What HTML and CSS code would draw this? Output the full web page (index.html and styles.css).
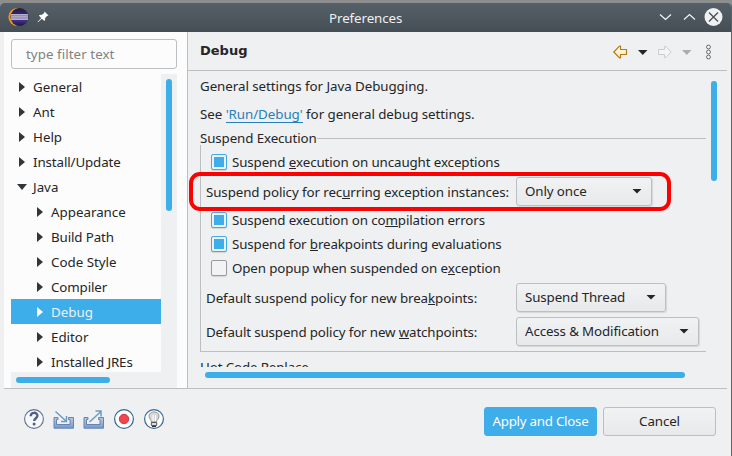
FILE: index.html
```html
<!DOCTYPE html>
<html lang="en">
<head>
<meta charset="utf-8">
<title>Preferences</title>
<link rel="stylesheet" href="styles.css">
</head>
<body>
<div class="window">
  <header class="titlebar">
    <svg class="logo" width="22" height="20" viewBox="0 0 22 20"><defs><linearGradient id="ec" x2="0" y2="1"><stop offset="0" stop-color="#241a4b"/><stop offset=".7" stop-color="#40318d"/><stop offset="1" stop-color="#211741"/></linearGradient></defs><circle cx="9.5" cy="10" r="9.1" fill="#f7941e"/><circle cx="11.5" cy="10" r="9" fill="#263038"/><circle cx="11.5" cy="10" r="8.7" fill="url(#ec)"/><path d="M3 7h17v6H3z" fill="#b3accb"/><path d="M3 8.7h17M3 11h17" stroke="#7d719e" stroke-width=".7"/></svg>
    <svg class="pin" width="12" height="12" viewBox="0 0 12 12"><path d="M7.5.5 11.5 4.5 10 5 8.2 7 8 9.8 6.8 9.5 4.8 7.7 1 11.3.5 11 4.2 7 2 4.8 2.3 4 5 3.8 7.1 2z" fill="#fcfcfc"/></svg>
    <h1 class="caption">Preferences</h1>
    <svg class="winbtns" width="66" height="20" viewBox="0 0 66 20" fill="none" stroke="#f4f5f6" stroke-width="1.2"><path d="m2 7.5 5.5 5 5.5-5M26 12.5l5.5-5 5.5 5"/><circle cx="55.5" cy="10" r="9" fill="#eff0f1" stroke="none"/><path d="m51 5.5 9 9m0-9-9 9" stroke="#475057" stroke-width="1.3"/></svg>
  </header>
  <main class="main">
    <aside class="side">
      <div class="filter"><span>type filter text</span></div>
      <div class="treebox">
        <ul class="tree">
          <li><i class="tri"></i><span>General</span></li>
          <li><i class="tri"></i><span>Ant</span></li>
          <li><i class="tri"></i><span>Help</span></li>
          <li><i class="tri"></i><span class="snug">Install/Update</span></li>
          <li><i class="tri open"></i><span>Java</span></li>
          <li class="sub"><i class="tri"></i><span>Appearance</span></li>
          <li class="sub"><i class="tri"></i><span class="snug">Build Path</span></li>
          <li class="sub"><i class="tri"></i><span>Code Style</span></li>
          <li class="sub"><i class="tri"></i><span class="snug">Compiler</span></li>
          <li class="sub sel"><i class="tri"></i><span>Debug</span></li>
          <li class="sub"><i class="tri"></i><span>Editor</span></li>
          <li class="sub"><i class="tri"></i><span class="snug">Installed JREs</span></li>
        </ul>
        <div class="gutter"><div class="thumb-v"></div></div>
        <div class="gutter-h"><div class="thumb-h"></div></div>
      </div>
    </aside>
    <section class="page">
      <div class="pagehead">
        <h2>Debug</h2>
        <svg class="nav" width="102" height="16" viewBox="0 0 102 16"><defs><linearGradient id="ar" x2="0" y2="1"><stop offset="0" stop-color="#fff"/><stop offset="1" stop-color="#ffe79a"/></linearGradient></defs><path d="M.8 8 6.5 2.2h1v3.3h6v5h-6v3.3h-1z" fill="url(#ar)" stroke="#b5781a" stroke-linejoin="round" stroke-width="1.2"/><path d="M25 6h9.500l-4.750 5z" fill="#232629"/><path d="M58.200 8 52.500 2.200h-1v3.300h-6v5h6v3.300h1z" fill="#f5f5f5" stroke="#cbcbcb" stroke-linejoin="round"/><path d="M69 6h9.500l-4.750 5z" fill="#acadae"/><g fill="#fff" stroke="#555" stroke-width=".9"><circle cx="95.500" cy="3" r="1.900"/><circle cx="95.500" cy="8" r="1.900"/><circle cx="95.500" cy="13" r="1.900"/></g></svg>
      </div>
      <div class="viewport">
        <div class="content">
          <p class="line1"><span class="s5">General settings for Java Debugging.</span></p>
          <p class="line2"><span class="s5">See <a>'Run/Debug'</a> for general debug settings.</span></p>
          <div class="legend"><span class="snug">Suspend Execution</span><i></i></div>
          <div class="group">
            <div class="check"><i class="box on"></i><span class="snug">Suspend <u>e</u>xecution on uncaught exceptions</span></div>
            <div class="row first"><span class="lab l1">Suspend policy for rec<u>u</u>rring exception instances:</span><div class="combo c1"><span class="snug">Only once</span><i></i></div><div class="mark"></div></div>
            <div class="check"><i class="box on"></i><span class="snug">Suspend execution on co<u>m</u>pilation errors</span></div>
            <div class="check"><i class="box on"></i><span class="snug">Suspend for <u>b</u>reakpoints during evaluations</span></div>
            <div class="check"><i class="box"></i><span class="s13">Open popup when suspended on e<u>x</u>ception</span></div>
            <div class="row"><span class="lab">Default suspend policy for new brea<u>k</u>points:</span><div class="combo c2"><span class="snug">Suspend Thread</span><i></i></div></div>
            <div class="row"><span class="lab s13">Default suspend policy for new <u>w</u>atchpoints:</span><div class="combo c3"><span class="s13">Access &amp; Modification</span><i></i></div></div>
          </div>
          <div class="hot"><span class="s13">Hot Code Replace</span></div>
        </div>
        <div class="vbar"></div>
        <div class="hbar"></div>
      </div>
    </section>
  </main>
  <footer class="footer">
    <svg class="tools" width="142" height="24" viewBox="0 0 142 24" fill="none">
      <defs><linearGradient id="tr" x2="0" y2="1"><stop offset="0" stop-color="#b9cde3"/><stop offset="1" stop-color="#7697c5"/></linearGradient></defs>
      <circle cx="11" cy="12" r="9.400" fill="#f6f8fb" stroke="#626f90" stroke-width="1.100"/>
      <path d="M7.700 9.300c0-4.700 6.900-4.400 6.700-.5-.1 2.400-3.200 2.600-3.200 5.300" stroke="#526087" stroke-width="2.400"/><circle cx="11.100" cy="17" r="1.500" fill="#526087"/>
      <path d="M31 10.500h4v2h-1.500v5H47v-5h-1.500v-2h5v10.700H31z" fill="url(#tr)" stroke="#6584b5"/>
      <path d="M32.500 4.500 43 14m.5-5v5.500H38" stroke="#6b9cc4" stroke-width="1.500"/>
      <path d="M61 10.500h4v2h-1.500v5H77v-5h-1.500v-2h5v10.700H61z" fill="url(#tr)" stroke="#6584b5"/>
      <path d="M66.500 15 78 4.500M72.500 4H78v5.500" stroke="#6b9cc4" stroke-width="1.500"/>
      <circle cx="101" cy="12" r="9.400" fill="#fff" stroke="#336897" stroke-width="1.200"/><circle cx="101" cy="12" r="4.700" fill="#ef4650" stroke="#d9303d"/>
      <circle cx="131" cy="12" r="9.400" fill="#fff" stroke="#336897" stroke-width="1.200"/>
      <path d="M128.500 15c0-2-2.500-3-2.500-6 0-5.500 10-5.500 10 0 0 3-2.500 4-2.500 6z" fill="#d8d8d8" stroke="#969696"/><path d="M130 8v6m2.500-6v6" stroke="#fff"/><path d="M128.300 15.500h5.400v3h-5.400z" fill="#ddd" stroke="#555"/><path d="M129 19.500h4" stroke="#333"/>
    </svg>
    <button class="btn primary"><span>Apply and Close</span></button>
    <button class="btn"><span class="snug">Cancel</span></button>
  </footer>
</div>
</body>
</html>
```
FILE: styles.css
```css
* { box-sizing: border-box; }
body { display: flow-root; height: 456px; margin: 0; overflow: hidden; background: #8e8e8e; font: 13.333px/20px "Noto Sans", sans-serif; color: #232629; }
h1, h2, p, ul { margin: 0; padding: 0; }
span { white-space: nowrap; }
u { display: inline-block; line-height: 14px; text-decoration: none; box-shadow: inset 0 -1px #232629; }
.snug { letter-spacing: -.11px; }
.s5 { letter-spacing: -.05px; }
.window { display: flex; flex-direction: column; width: 732px; height: 453px; margin-top: 3px; background: #eff0f1; border-right: 1px solid #5c6368; border-radius: 4px 4px 0 0; overflow: hidden; }
.titlebar { display: flex; align-items: center; flex: none; height: 29px; padding: 0 7px 0 8px; background: linear-gradient(#566068, #454e55); color: #eff0f1; }
.logo { margin-right: 7px; margin-bottom: 1px; }
.pin { margin-bottom: 1px; }
.caption { flex: 1; font-size: 13.333px; font-weight: 400; padding-left: 280px; letter-spacing: -.08px; }
.winbtns { margin-bottom: 1px; }
.main { display: flex; flex: none; height: 357px; margin: 0 4px; border-bottom: 1px solid #bcbec0; }
.side { width: 184px; padding: 7px 10px 0 7px; background: #fcfcfc; border-right: 1px solid #bcbec0; }
.filter { width: 166px; height: 30px; padding: 4px 14px; border: 1px solid #bcbec0; border-radius: 3px; color: #7f8385; letter-spacing: .06px; }
.treebox { display: grid; grid-template: 298px 16px / 150px 16px; margin-top: 5px; }
.tree { list-style: none; overflow: hidden; }
.tree li { display: flex; align-items: center; height: 25px; padding-left: 8px; padding-top: 1px; }
.tree .sub { padding-left: 26px; }
.tri { width: 6px; height: 10px; margin-right: 8px; background: #31363b; clip-path: polygon(0 0, 100% 50%, 0 100%); }
.tri.open { width: 10px; height: 6px; margin: 0 6px 0 -2px; clip-path: polygon(0 0, 100% 0, 50% 100%); }
.tree .sel { background: #3daee9; color: #eff0f1; }
.sel .tri { background: #fcfcfc; }
.gutter, .gutter-h { background: #eff0f1; }
.gutter { padding: 5px; }
.gutter-h { grid-column: 1 / 3; padding: 5px; }
.thumb-v { width: 6px; height: 132px; border-radius: 3px; background: #3daee9; }
.thumb-h { width: 94px; height: 6px; border-radius: 3px; background: #3daee9; }
.page { flex: 1; }
.pagehead { display: flex; justify-content: space-between; align-items: center; height: 39px; padding: 0 12px; border-bottom: 1px solid #bcbec0; }
h2 { font: 700 13px/20px "DejaVu Sans", sans-serif; }
.nav { margin-top: 2px; }
.viewport { display: grid; grid-template: 296px 21px / 518px 6px; column-gap: 5px; }
.content { overflow: hidden; padding-left: 12px; }
.line1 { margin-top: 5px; height: 28px; }
.line2 { height: 24px; }
a { display: inline-block; line-height: 17px; color: #2980b9; box-shadow: inset 0 -1px #2980b9; }
.legend { display: flex; height: 20px; }
.legend i { flex: 1; height: 1px; margin-top: 10px; background: #bcbec0; }
.group { margin-top: -3px; height: 207px; padding: 5px 0 0 5px; border: solid #bcbec0; border-width: 0 0 1px 1px; }
.check { display: flex; align-items: center; height: 24px; padding-left: 5px; }
.box { width: 16px; height: 16px; margin-right: 5px; border: 1px solid #999c9f; border-radius: 2px; background: #f2f3f4; box-shadow: 0 1px 1px #d3d4d5; }
.box.on { padding: 2px; border-color: #3daee9; background: #3daee9 content-box; }
.row { display: flex; height: 34px; align-items: center; }
.row.first { position: relative; }
.lab { width: 310px; padding-top: 1px; letter-spacing: -.09px; }
.s13 { letter-spacing: -.13px; }
.combo { display: flex; align-items: center; justify-content: space-between; height: 29px; padding: 0 9px 0 8px; border: 1px solid #bcbec0; border-radius: 3px; background: linear-gradient(#f1f2f3, #e8e9ea); box-shadow: 1px 1px 1px #d6d7d8; }
.c1 { width: 136px; }
.c2 { width: 150px; }
.c3 { width: 183px; }
.combo i { width: 10px; height: 5px; background: #232629; clip-path: polygon(0 0, 100% 0, 50% 100%); }
.mark { position: absolute; left: -17px; top: -2px; width: 482px; height: 39px; border: 4px solid #f00; border-radius: 11px; }
.hot { margin-top: 5px; }
.vbar { width: 6px; height: 100px; margin-top: 10px; border-radius: 3px; background: #3daee9; }
.hbar { width: 480px; height: 6px; margin: 5px 0 0 17px; border-radius: 3px; background: #3daee9; }
.footer { display: flex; align-items: center; height: 64px; padding: 0 15px 0 23px; gap: 6px; }
.tools { margin-right: auto; margin-top: -4px; }
.btn { width: 113px; height: 29px; padding: 0; border: 1px solid #bcbec0; border-radius: 3px; background: linear-gradient(#f1f2f3, #e8e9ea); font: inherit; color: inherit; }
.primary { background: #3daee9; border-color: #3daee9; color: #fcfcfc; letter-spacing: -.25px; }
```
